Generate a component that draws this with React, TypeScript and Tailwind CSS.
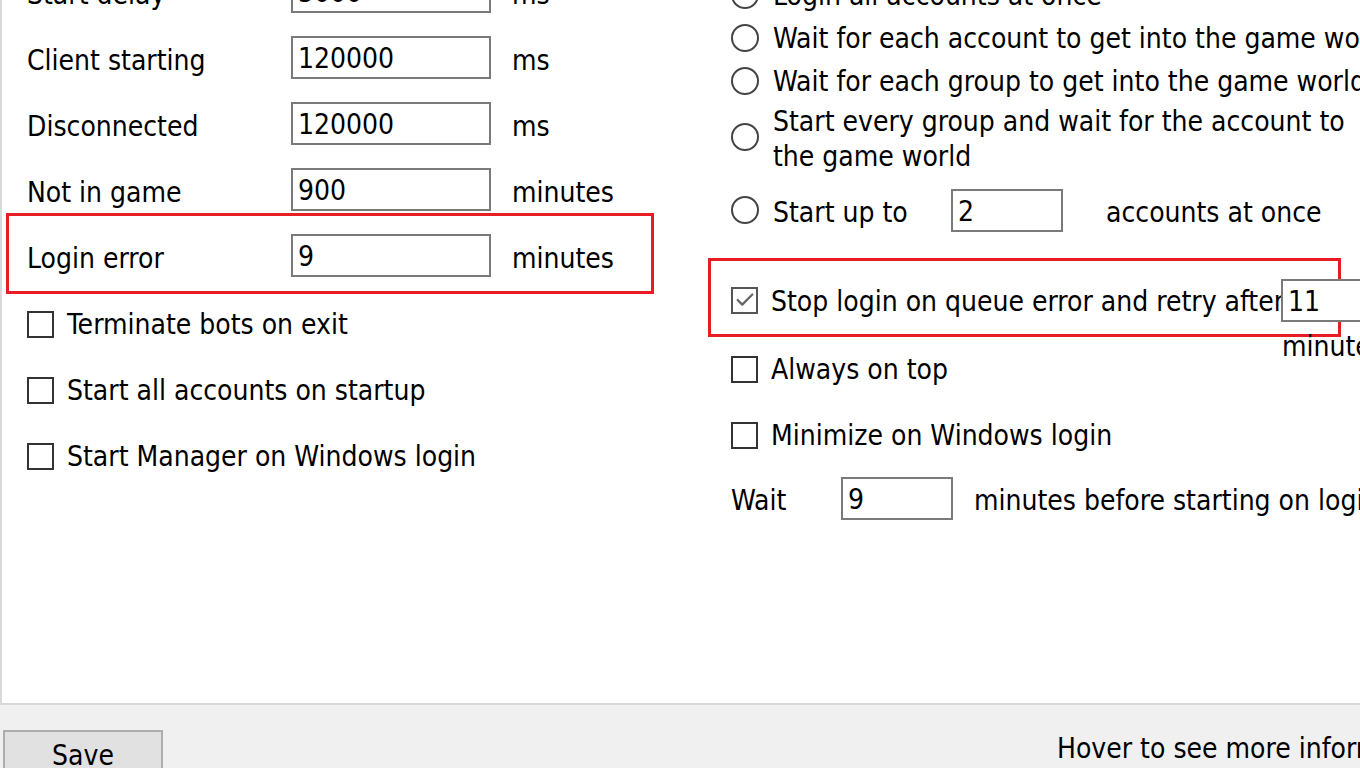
import { Check } from 'lucide-react';

const font = { fontFamily: '"DejaVu Sans Condensed", "DejaVu Sans", Tahoma, sans-serif' };

function Field({ value, width = 'w-[200px]' }: { value: string; width?: string }) {
  return (
    <div className={`${width} h-[43px] shrink-0 border-2 border-[#7a7a7a] bg-white pl-[5px] pt-[3px] flex items-center leading-none`}>
      {value}
    </div>
  );
}

function Box({ checked = false }: { checked?: boolean }) {
  return (
    <div
      className={`w-[27px] h-[27px] shrink-0 border-2 bg-white flex items-center justify-center ${
        checked ? 'border-[#555]' : 'border-[#333]'
      }`}
    >
      {checked && <Check size={22} strokeWidth={2.5} className="text-[#666]" />}
    </div>
  );
}

function Radio() {
  return <div className="w-[28px] h-[28px] shrink-0 rounded-full border-2 border-[#444] bg-white" />;
}

function Highlight({ className }: { className: string }) {
  return <div className={`absolute border-[3px] border-[#e81c24] pointer-events-none ${className}`} />;
}

function TimeoutRow({ label, value, unit }: { label: string; value: string; unit: string }) {
  return (
    <div className="h-[66px] flex items-center">
      <span className="w-[264px] shrink-0 pt-[7px]">{label}</span>
      <Field value={value} />
      <span className="ml-[21px] pt-[7px]">{unit}</span>
    </div>
  );
}

function CheckRow({ label, checked }: { label: string; checked?: boolean }) {
  return (
    <div className="h-[66px] pt-[6px] flex items-center gap-[13px]">
      <Box checked={checked} />
      <span className="pt-[2px]">{label}</span>
    </div>
  );
}

function RadioRow({ label }: { label: string }) {
  return (
    <div className="h-[43px] flex items-center gap-[14px] whitespace-nowrap">
      <Radio />
      <span className="pt-[3px]">{label}</span>
    </div>
  );
}

export default function App() {
  return (
    <div className="w-[1360px] h-[768px] overflow-hidden flex flex-col text-[28px] text-black bg-[#f0f0f0]" style={font}>
      <div className="h-[705px] shrink-0 bg-white border-l-2 border-b-2 border-[#d9d9d9] flex overflow-hidden">
        {/* left column */}
        <div className="w-[729px] shrink-0 pl-[25px] mt-[-42px] flex flex-col">
          <TimeoutRow label="Start delay" value="5000" unit="ms" />
          <TimeoutRow label="Client starting" value="120000" unit="ms" />
          <TimeoutRow label="Disconnected" value="120000" unit="ms" />
          <TimeoutRow label="Not in game" value="900" unit="minutes" />
          <div className="relative">
            <Highlight className="left-[-21px] top-[-9px] w-[648px] h-[81px]" />
            <TimeoutRow label="Login error" value="9" unit="minutes" />
          </div>
          <CheckRow label="Terminate bots on exit" />
          <CheckRow label="Start all accounts on startup" />
          <CheckRow label="Start Manager on Windows login" />
        </div>

        {/* right column */}
        <div className="flex-1 mt-[-27px] flex flex-col whitespace-nowrap">
          <RadioRow label="Login all accounts at once" />
          <RadioRow label="Wait for each account to get into the game world" />
          <RadioRow label="Wait for each group to get into the game world" />
          <div className="h-[70px] flex items-center gap-[14px]">
            <Radio />
            <span className="leading-[35px] pt-[3px]">
              Start every group and wait for the account to
              <br />
              the game world
            </span>
          </div>
          <div className="mt-[16px] h-[44px] flex items-center">
            <Radio />
            <span className="ml-[14px] w-[178px] pt-[5px]">Start up to</span>
            <Field value="2" width="w-[112px]" />
            <span className="ml-[43px] pt-[5px]">accounts at once</span>
          </div>

          <div className="relative mt-[35px] h-[66px] flex items-center">
            <Highlight className="left-[-23px] top-[-9px] w-[633px] h-[79px]" />
            <Box checked />
            <span className="ml-[13px] w-[510px] pt-[3px] overflow-hidden">Stop login on queue error and retry after</span>
            <div className="relative">
              <Field value="11" width="w-[112px]" />
              <span className="absolute left-[1px] top-[47px]">minutes</span>
            </div>
          </div>
          <CheckRow label="Always on top" />
          <CheckRow label="Minimize on Windows login" />
          <div className="h-[66px] flex items-center">
            <span className="w-[110px] pt-[5px]">Wait</span>
            <Field value="9" width="w-[112px]" />
            <span className="ml-[21px] pt-[5px]">minutes before starting on login</span>
          </div>
        </div>
      </div>

      <div className="flex-1 flex items-start justify-between pt-[25px]">
        <button className="ml-[3px] w-[160px] h-[48px] bg-[#e1e1e1] border-2 border-[#adadad] flex items-center justify-center pt-[4px]">
          Save
        </button>
        <span className="mt-[-2px] w-[303px] whitespace-nowrap overflow-hidden">Hover to see more information</span>
      </div>
    </div>
  );
}
